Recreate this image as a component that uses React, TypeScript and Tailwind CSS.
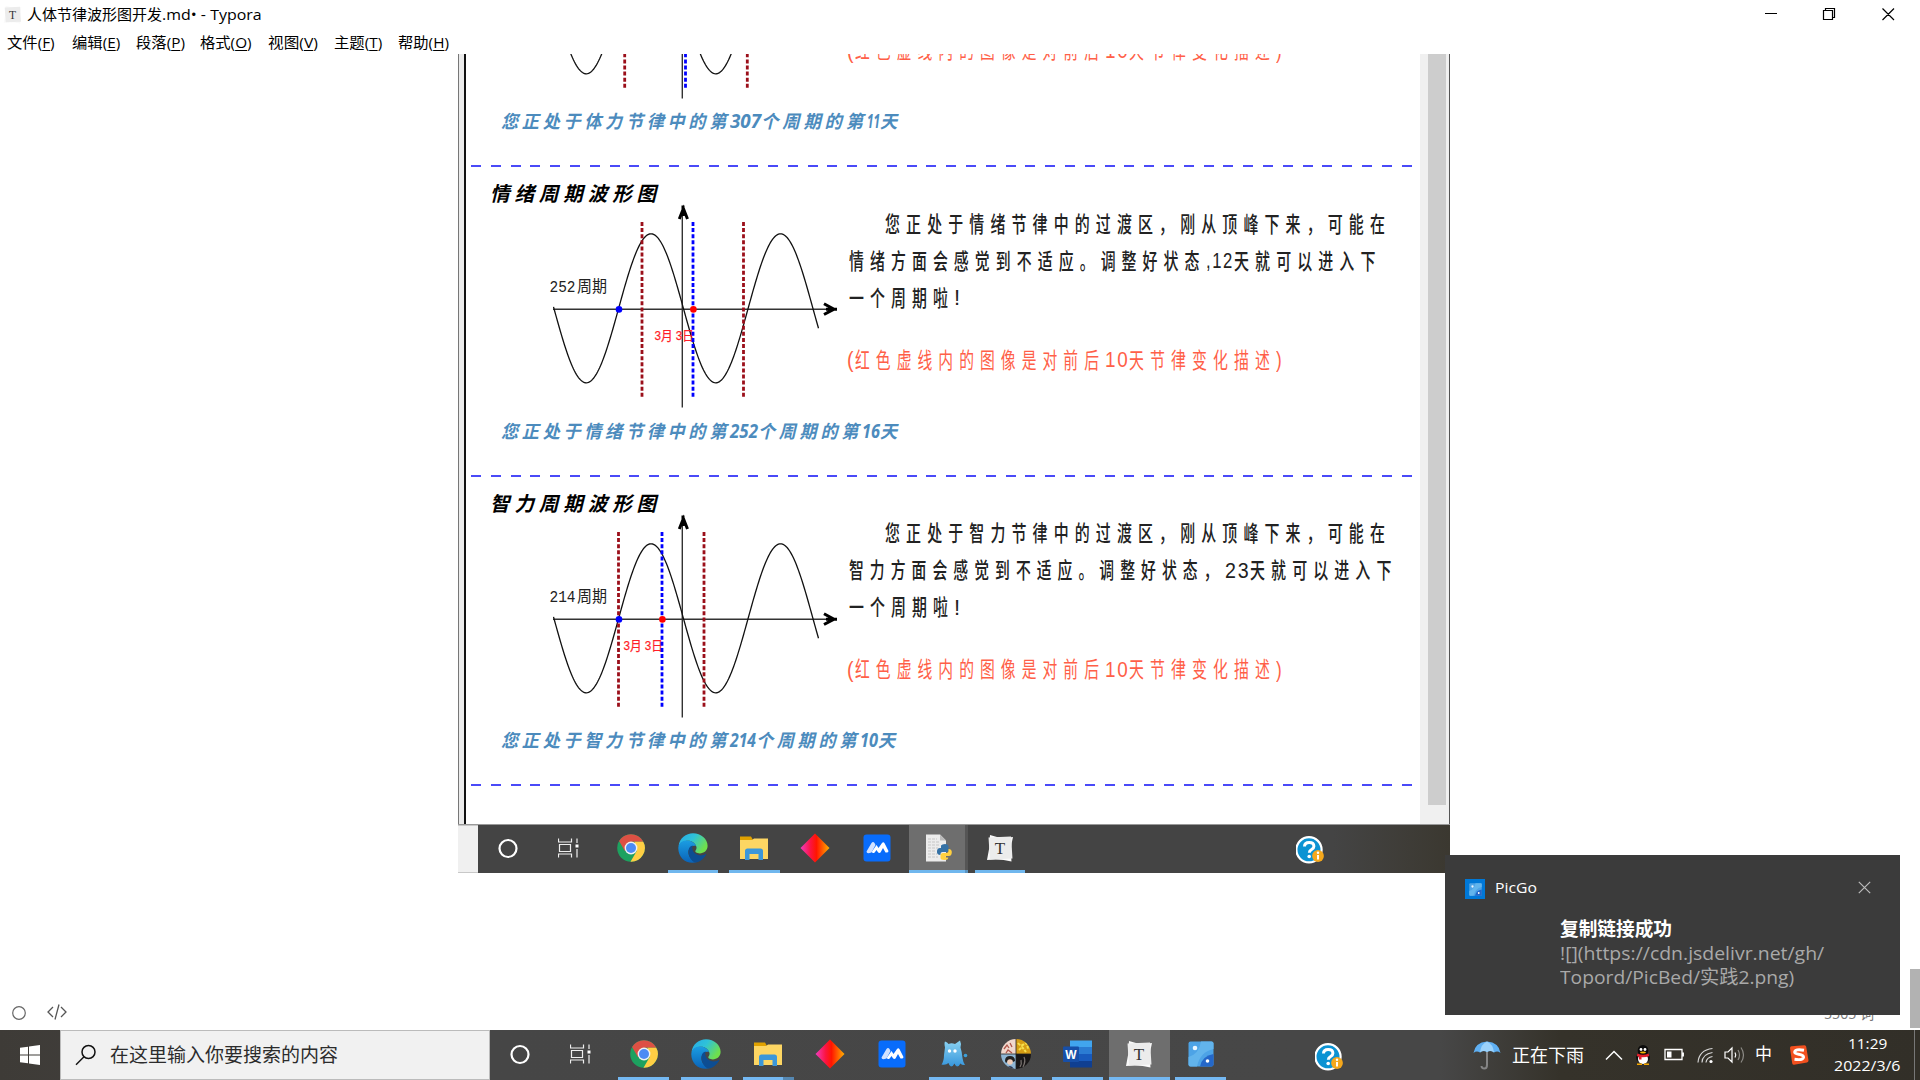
import { useLayoutEffect, useRef, useState, type ReactNode } from 'react';

/** Stretches its text horizontally so that it fills exactly `w` pixels. */
function Fit({ w, className = '', children }: { w: number; className?: string; children: ReactNode }) {
  const ref = useRef<HTMLSpanElement>(null);
  const [scale, setScale] = useState(1);
  useLayoutEffect(() => {
    if (ref.current) setScale(w / ref.current.offsetWidth);
  }, [w]);
  return (
    <span className="inline-block shrink-0 whitespace-nowrap text-left" style={{ width: w }}>
      <span ref={ref} className={`inline-block origin-left whitespace-pre ${className}`} style={{ transform: `scaleX(${scale})` }}>
        {children}
      </span>
    </span>
  );
}

type Seg = [string, number];

function wavePath() {
  const pts: string[] = [];
  for (let x = 553.5; x <= 818.5; x += 1) {
    const y = 308.3 + 74.5 * Math.sin((2 * Math.PI * (x - 553.9)) / 129.5);
    pts.push(`${x},${y.toFixed(2)}`);
  }
  return 'M' + pts.join('L');
}
const WAVE = wavePath();

interface Cycle {
  title: string;
  label: string;
  reds: number[];
  blue: number;
  dateX: number;
  lines: Seg[][];
  caption: Seg[];
}

const cycles: Cycle[] = [
  {
    title: '体力周期波形图',
    label: '307',
    reds: [624.7, 747.3],
    blue: 685.5,
    dateX: 647,
    lines: [[['您正处于体力节律中的过渡区，刚从顶峰下来，可能在', 506]], [], []],
    caption: [['您正处于体力节律中的第', 229], ['307', 31], ['个周期的第', 106], ['11', 13], ['天', 21]],
  },
  {
    title: '情绪周期波形图',
    label: '252',
    reds: [642, 743.5],
    blue: 693,
    dateX: 654.5,
    lines: [
      [['您正处于情绪节律中的过渡区，刚从顶峰下来，可能在', 506]],
      [['情绪方面会感觉到不适应。调整好状态', 356.5], [',12', 28], ['天就可以进入下', 147.5]],
      [['一个周期啦', 105], ['!', 8]],
    ],
    caption: [['您正处于情绪节律中的第', 229], ['252', 28], ['个周期的第', 104], ['16', 18], ['天', 21]],
  },
  {
    title: '智力周期波形图',
    label: '214',
    reds: [618.5, 704],
    blue: 662,
    dateX: 623.5,
    lines: [
      [['您正处于智力节律中的过渡区，刚从顶峰下来，可能在', 506]],
      [['智力方面会感觉到不适应。调整好状态，', 375.5], ['23', 25], ['天就可以进入下', 147.5]],
      [['一个周期啦', 105], ['!', 8]],
    ],
    caption: [['您正处于智力节律中的第', 229], ['214', 26], ['个周期的第', 104], ['10', 18], ['天', 21]],
  },
];

const NOTE: Seg[] = [['(', 8], ['红色虚线内的图像是对前后', 250], ['10', 24], ['天节律变化描述', 147], [')', 7]];

const isLatin = (s: string) => /^[\x20-\x7e]+$/.test(s);

function Line({ segs, indent = false }: { segs: Seg[]; indent?: boolean }) {
  return (
    <div className={`flex h-[37px] items-center leading-[37px] ${indent ? 'pl-[38px]' : ''}`}>
      {segs.map(([t, w], i) => (
        <Fit key={i} w={w} className={isLatin(t) ? 'text-[22px] font-normal font-["Liberation_Sans"] tracking-[2px] leading-[37px]' : 'text-[22px] tracking-[9px] leading-[37px]'}>
          {t}
        </Fit>
      ))}
    </div>
  );
}

function Chart({ c }: { c: Cycle }) {
  return (
    <svg className="block shrink-0" width="381" height="205" viewBox="466 203 381 205">
      <g fill="none">
        <path d="M682.3 407.500V215M553 309.3H826" stroke="#333" strokeWidth="1.4" />
        <path d="M683 205.500V216M679.3 219L683.4 208.500L687.500 219" stroke="#000" strokeWidth="3" />
        <path d="M824 303.800L834 309.200L824 314.500M826 309.200H837" stroke="#000" strokeWidth="3" />
        <path d={WAVE} stroke="#111" strokeWidth="1.3" />
        {c.reds.map((x) => (
          <path key={x} d={`M${x} 222V397`} stroke="#9b0f1a" strokeWidth="2.8" strokeDasharray="4 2.1" />
        ))}
      </g>
      <text x={c.dateX} y="339.800" fontSize="13" fill="#ff1e28" stroke="#ff1e28" strokeWidth=".25" textLength="39.5" lengthAdjust="spacingAndGlyphs" fontFamily="Liberation Sans, Noto Sans CJK SC, sans-serif">
        3月 3日
      </text>
      <path d={`M${c.blue} 222V397`} stroke="#0000ff" strokeWidth="2.8" strokeDasharray="4 2.1" />
      <circle cx="619" cy="309.4" r="3.3" fill="#0000ff" />
      <circle cx={c.blue + 0.4} cy="309.4" r="3.3" fill="#ff0000" />
      <text x="549.5" y="292" fontSize="16" fill="#222" textLength="26" lengthAdjust="spacingAndGlyphs" fontFamily="Liberation Mono, monospace">
        {c.label}
      </text>
      <text x="577" y="291.800" fontSize="16" fill="#222" textLength="30" lengthAdjust="spacingAndGlyphs" fontFamily="Noto Sans CJK SC, sans-serif">
        周期
      </text>
    </svg>
  );
}

const Dashes = () => (
  <div className="ml-[5px] h-[2px] w-[941.500px] bg-[repeating-linear-gradient(90deg,#4a4af8_0px,#4a4af8_10px,transparent_10px,transparent_19.8px)]" />
);

function Section({ c }: { c: Cycle }) {
  return (
    <section className="flex h-[309.4px] shrink-0 flex-col">
      <Dashes />
      <div className="h-[36px] pl-[24px] pt-[16px]">
        <Fit w={171} className="text-[20px] font-bold italic leading-[20px] tracking-[5px] text-black">
          {c.title}
        </Fit>
      </div>
      <div className="flex h-[205px]">
        <Chart c={c} />
        <div className="pt-[3px] font-medium text-[#222]">
          <Line segs={c.lines[0]} indent />
          <div className="pl-[2px]">
            <Line segs={c.lines[1]} />
            <Line segs={c.lines[2]} />
          </div>
          <div className="mt-[25px] font-normal text-[#ff5f48]">
            <Line segs={NOTE} />
          </div>
        </div>
      </div>
      <div className="flex pl-[35px] pt-[11.500px] font-bold italic text-[#4c8bbd]">
        {c.caption.map(([t, w], i) => (
          <Fit key={i} w={w} className={isLatin(t) ? 'text-[20px] leading-[22px]' : 'text-[18px] tracking-[4px] leading-[22px]'}>
            {t}
          </Fit>
        ))}
      </div>
    </section>
  );
}

/* ---------- icons ---------- */
const Cortana = () => (
  <svg width="24" height="24" viewBox="0 0 24 24"><circle cx="12" cy="12.500" r="8.5" fill="none" stroke="#fff" strokeWidth="2.2" /></svg>
);
const TaskView = () => (
  <svg width="22" height="22" viewBox="0 0 22 22" fill="none" stroke="#eee" strokeWidth="1.2">
    <path d="M.5 1.5V5H13.5V1.5M.5 20.5V17H13.5V20.5M1.5 7.5H12.5V14.5H1.5zM19 1.5V6M19 12V20.5" />
    <path d="M17.5 7.5h3v3h-3z" fill="#fff" stroke="none" />
  </svg>
);
const Chrome = () => (
  <svg width="28" height="28" viewBox="0 0 28 28">
    <circle cx="14" cy="14" r="13.8" fill="#1da15f" />
    <path d="M2.1 7A13.8 13.8 0 0 1 25.9 7L26 7.7H14L8 17.2z" fill="#dd5044" />
    <path d="M25.9 7A13.8 13.8 0 0 1 13.5 27.8L19.6 17.3L17.4 7.7H26.2z" fill="#ffce44" />
    <circle cx="14" cy="14" r="6.4" fill="#f1f1f1" /><circle cx="14" cy="14" r="5" fill="#4c8bf5" />
  </svg>
);
const Edge = () => (
  <svg width="30" height="30" viewBox="0 0 30 30">
    <defs>
      <linearGradient id="eg" x1="0" y1="0" x2="1" y2=".5"><stop offset="0" stopColor="#25a9e8" /><stop offset=".5" stopColor="#2fc2d8" /><stop offset="1" stopColor="#6fe04c" /></linearGradient>
      <linearGradient id="eb" x1="0" y1="0" x2="0" y2="1"><stop offset="0" stopColor="#1b9de2" /><stop offset="1" stopColor="#0a63b8" /></linearGradient>
    </defs>
    <path d="M.6 13C1.4 5 8 .2 15 .2c8 0 14.6 5.6 14.6 12.6 0 5-3.8 7.6-7.8 7.6-3.4 0-5-1.4-4.4-2.6 1-1.4 1.4-2.4 1-4C17.600 10 13 7 8.600 7.800 4.500 8.500 1.500 11 .6 13z" fill="url(#eg)" />
    <path d="M.3 15C.6 9.500 5 7.300 9 7.500c5 .2 8.500 3 9 5.500-2.500-1-6.500.5-7.500 4.500-1.200 5.500 3.500 10.500 8.500 11.500C9 32 .2 25 .3 15z" fill="url(#eb)" />
    <path d="M10.700 16.500c.5-2.200 2-3.600 4-4-1 2-.5 5.500 1.800 7.500 3 2.600 7.500 3.400 11 1 .6-.3 1 .2.6.8C25 27 20.500 29.800 17 29.500c-4-1.500-7.200-7-6.300-13z" fill="#0d4d92" />
  </svg>
);
const Folder = () => (
  <svg width="28" height="24" viewBox="0 0 28 24">
    <path d="M0 .5h11l2 3.500H0z" fill="#e0a100" /><path d="M0 4h12l2-1.500h14V23H0z" fill="#fdd663" />
    <path d="M5 24V15q0-2.500 2.500-2.500h13Q23 12.500 23 15v9h-4.500v-6h-9v6z" fill="#3c97d9" />
  </svg>
);
const Diamond = () => (
  <svg width="30" height="30" viewBox="0 0 30 30">
    <defs><linearGradient id="dg"><stop offset="0" stopColor="#f03cc0" /><stop offset=".35" stopColor="#fb1440" /><stop offset=".55" stopColor="#ff1500" /><stop offset="1" stopColor="#ffb000" /></linearGradient></defs>
    <path d="M15 .5L29.500 15L15 29.500L.5 15z" fill="url(#dg)" />
  </svg>
);
const Mountain = () => (
  <svg width="28" height="28" viewBox="0 0 28 28">
    <rect x=".5" y=".5" width="27" height="27" rx="3" fill="#086cfb" />
    <path d="M3.500 17.500L8.500 9q1.500-2 3 0l1 2-4 7.500q-5 2-5-1z" fill="#d2e2ff" />
    <path d="M9 17.500L13.500 11l2 3L19 9q1.500-1.500 2.700.5L25.500 17q0 2-3 1.500L20 14l-2.500 4.500q-1.500 1-2.700-.5L13.500 16l-1.800 2.500Q9 20 9 17.500z" fill="#fff" />
  </svg>
);
const TyporaIcon = ({ s = 28 }: { s?: number }) => (
  <svg width={s} height={s} viewBox="0 0 28 28">
    <path d="M4 1Q14 5 27 3Q24 14 25.500 27.500Q14 24.500 1 26Q4 14 4 1z" fill="#fafafa" />
    <path d="M2.500 3.500L25 2.500L26.500 24.500L4 25.500z" fill="#ececec" />
    <text x="14" y="20" fontSize="17" textAnchor="middle" fill="#333" fontFamily="Liberation Serif, serif">T</text>
  </svg>
);
const PyFile = () => (
  <svg width="28" height="28" viewBox="0 0 28 28">
    <path d="M2 .5h14l6 6V27.500H2z" fill="#ececec" /><path d="M16 .5v6h6z" fill="#bbb" />
    <path d="M4 5h9M4 8h12M4 11h12M4 14h10M4 17h8M4 20h9M4 23h10" stroke="#c6c6c6" strokeDasharray="3 1" />
    <path d="M17 14v-2.500q1-1.500 4-1.500t3.500 2v4q0 2-2 2h-4q-2 0-2 2v1q-4 0-3.500-4 .3-3 3-3h5z" fill="#3471a5" />
    <path d="M24.500 15q3.500 0 3.300 3.500-.2 3.500-3 3.500h-3v1.500h2.500q0 2.500-4 2.500t-3.800-2.500v-2q0-2.500 2.500-2.500h3.500q2 0 2-2z" fill="#ffd040" />
  </svg>
);
const Help = () => (
  <svg width="28" height="28" viewBox="0 0 28 28">
    <circle cx="13" cy="13.800" r="12.600" fill="#0c93d3" stroke="#fff" strokeWidth="2.200" />
    <path d="M8.500 10.500q0-4 4.700-4t4.700 3.700q0 2-2.300 3.300t-2.300 3.200" fill="none" stroke="#fff" strokeWidth="3" /><circle cx="13.200" cy="20.500" r="1.800" fill="#fff" />
    <circle cx="22" cy="20" r="5.900" fill="#f5a81c" /><path d="M22 19v4.500" stroke="#fff" strokeWidth="1.900" /><circle cx="22" cy="16.800" r="1.200" fill="#fff" />
  </svg>
);
const Ghost = () => (
  <svg width="28" height="28" viewBox="0 0 28 28">
    <defs><linearGradient id="gg" x1="0" y1="0" x2="0" y2="1"><stop offset="0" stopColor="#8bd3f2" /><stop offset="1" stopColor="#3796dc" /></linearGradient></defs>
    <path d="M5 7.500Q4 3 5 1.500Q7.500 2 8.500 4q3-1.500 6.500 0Q17.500 2 20 .5Q21.500 3 20.500 7.500Q22 12 22.500 18q.5 4 2.500 7-3 .5-4.500-1.500-1.500 3-3.500 3-2-1-2.500-3-1.500 3-3.500 3-2-1-2.500-3.500Q6 25.500 1.500 24.500Q4 21 4 15z" fill="url(#gg)" />
    <circle cx="9.500" cy="11" r="1.700" fill="#fff" /><circle cx="15" cy="11" r="1.700" fill="#fff" /><circle cx="25.500" cy="15.500" r="1.800" fill="#3c9fd9" />
  </svg>
);
const Photo = () => (
  <svg width="30" height="30" viewBox="0 0 30 30">
    <clipPath id="pc"><circle cx="15" cy="15" r="15" /></clipPath>
    <g clipPath="url(#pc)">
      <path d="M0 0h15v15H0z" fill="#f1d8cd" /><path d="M15 0h15v15H15z" fill="#d69d14" /><path d="M0 15h15v15H0z" fill="#8fb6d4" /><path d="M15 15h15v15H15z" fill="#191717" />
      <path d="M3 10l3-4 2 3M9 4l2 4M5 14l2-3 4 3" stroke="#b0564a" fill="none" strokeWidth="1.300" />
      <path d="M17 4q3 4 6 1t4 5M18 11l3-3 4 5" stroke="#f6e04e" fill="none" strokeWidth="2" strokeDasharray="3 1" />
      <path d="M4 22q0-5 5-5t5 5l-2 1-4-2-3 3z" fill="#222" /><circle cx="9" cy="23" r="2.800" fill="#f0cdb8" /><path d="M5 30q4-6 8 0z" fill="#2b3550" />
      <path d="M19 28q2-3 1-7M23 18q2 4-1 10" stroke="#77716e" fill="none" strokeWidth="1.300" />
      <path d="M15 0v30M0 15h30" stroke="#222" strokeWidth=".8" />
    </g>
  </svg>
);
const Word = () => (
  <svg width="30" height="28" viewBox="0 0 30 28">
    <path d="M7 .5h22V7H7z" fill="#41a5ee" /><path d="M7 7h22v7H7z" fill="#2b7cd3" /><path d="M7 14h22v7H7z" fill="#185abd" /><path d="M7 21h22v6.500H7z" fill="#103f91" />
    <rect x="0" y="6.500" width="16" height="15.500" rx="1" fill="#174fa8" />
    <text x="8" y="18.500" fontSize="12" fontWeight="700" fill="#fff" textAnchor="middle" fontFamily="Liberation Sans, sans-serif">W</text>
  </svg>
);
const PicGo = ({ s = 26 }: { s?: number }) => (
  <svg width={s} height={s} viewBox="0 0 26 26">
    <rect x=".5" y=".5" width="25" height="25" rx="2" fill="#4da3e6" />
    <path d="M13 .5h10.500q2 0 2 2V8Q12 11 9 25.500H2.500q-2 0-2-2V16Q11 13 13 .5z" fill="#62b4ec" />
    <path d="M25.500 13v10.500q0 2-2 2H12Q14 15 25.500 13z" fill="#2467c9" />
    <circle cx="7" cy="7" r="2.300" fill="#eaf6ff" /><circle cx="19.500" cy="20" r="1.800" fill="#fff" />
  </svg>
);
const Umbrella = () => (
  <svg width="28" height="30" viewBox="0 0 28 30">
    <path d="M14 10v15q0 3.500-2.700 3.500T8.500 26" fill="none" stroke="#858585" strokeWidth="2" />
    <path d="M.5 13Q2 2.500 14 1.500Q26 2.500 27.500 13q-3-2.500-6.500-.5-3.500-2.500-7-.5-3.500-2-7 .5-3.500-2-6.500.5z" fill="#5fb0f3" />
    <path d="M7 12.500Q8 4 14 1.500Q20 4 21 12.500q-3.500-2.500-7-.5-3.500-2-7 .5z" fill="#9bd2fb" />
  </svg>
);
const QQ = () => (
  <svg width="16" height="20" viewBox="0 0 16 20">
    <ellipse cx="8" cy="12.500" rx="7" ry="5.500" fill="#111" /><ellipse cx="8" cy="14" rx="5" ry="5" fill="#fff" />
    <ellipse cx="8" cy="5.500" rx="5.300" ry="5.500" fill="#0b0b0b" /><circle cx="6" cy="4.500" r="1.400" fill="#fff" /><circle cx="10" cy="4.500" r="1.400" fill="#fff" />
    <ellipse cx="8" cy="7.500" rx="3" ry="1" fill="#f5b400" /><path d="M2.500 8.500q5.500 2.500 11 0l.8 2.500Q8 13.500 1.700 11zM4 11h2.500v3.500H4z" fill="#e2202c" />
    <path d="M2 18.500h5v1.500H2zM9 18.500h5v1.500H9z" fill="#f5a800" />
  </svg>
);

const Slot = ({ children, bar, active = false, w = 'w-[62.1px]' }: { children?: ReactNode; bar?: string; active?: boolean; w?: string }) => (
  <div className={`flex h-full shrink-0 flex-col items-center ${w} ${active ? 'bg-[#6e6e6e]' : ''}`}>
    <div className="flex flex-1 items-center justify-center pt-[1px]">{children}</div>
    <div className={`h-[3px] shrink-0 ${bar ?? ''}`} />
  </div>
);

function InnerTaskbar() {
  const w = 'w-[61.4px]';
  return (
    <div className="flex h-[49.5px] border-t border-[#999]">
      <div className="w-[20px] border-y border-[#c8c8c8] bg-[#f0f0f0]" />
      <div className="flex flex-1 bg-[linear-gradient(90deg,#444_0%,#444_88%,#3b3830_100%)]">
        <Slot w="w-[60px]"><Cortana /></Slot>
        <Slot w="w-[61px]"><TaskView /></Slot>
        <Slot w="w-[63px]"><Chrome /></Slot>
        <Slot w={w} bar="w-[50px] bg-[#70b7ee]"><Edge /></Slot>
        <Slot w={w} bar="w-[51px] bg-[#70b7ee]"><Folder /></Slot>
        <Slot w={w}><Diamond /></Slot>
        <Slot w={w}><Mountain /></Slot>
        <div className="flex w-[61.400px] pl-[1px]">
          <Slot w="w-[56px]" active bar="w-full bg-[#70b7ee]"><div className="pl-[3px]"><PyFile /></div></Slot>
          <div className="flex w-[3.500px] flex-col justify-end bg-[#555]"><div className="h-[3px] bg-[#5a93c0]" /></div>
        </div>
        <Slot w="w-[62px]" bar="w-[50px] bg-[#70b7ee]"><TyporaIcon /></Slot>
        <div className="flex flex-1 items-center pl-[265px] pt-[2px]"><Help /></div>
      </div>
    </div>
  );
}

const menus: [string, string, string][] = [
  ['文件', 'F', 'w-[64.500px]'], ['编辑', 'E', 'w-[64px]'], ['段落', 'P', 'w-[64.500px]'], ['格式', 'O', 'w-[68px]'],
  ['视图', 'V', 'w-[66px]'], ['主题', 'T', 'w-[64px]'], ['帮助', 'H', 'w-[64px]'],
];
const menuTextWidth = [48, 48, 49, 52, 50, 48, 51];

export default function App() {
  return (
    <div className="relative flex h-[1080px] w-[1920px] flex-col overflow-hidden bg-white text-black [font-family:'Open_Sans','Noto_Sans_CJK_SC',sans-serif]">
      <header className="h-[54px] shrink-0">
        <div className="flex h-[28px] items-center justify-between">
          <div className="flex items-center pl-[3px]">
            <TyporaIcon s={19} />
            <div className="flex pl-[5px] text-[15px] leading-[20px]">
              <Fit w={135}>人体节律波形图开发</Fit>
              <Fit w={100}>.md• - Typora</Fit>
            </div>
          </div>
          <svg className="mr-[10px]" width="160" height="28" viewBox="1750 0 160 28" fill="none" stroke="#000" strokeWidth="1.200">
            <path d="M1765 13.500h12M1823.500 10.500h9v9h-9zM1825.500 10.500V8.500h9v9h-2M1882.500 8.500l11.500 11.500M1894 8.500l-11.500 11.500" />
          </svg>
        </div>
        <nav className="flex pl-[7px] pt-[3px] text-[15px] leading-[22px]">
          {menus.map(([t, k, w], i) => (
            <div key={k} className={w}>
              <Fit w={menuTextWidth[i]}>{t}(<span className="underline underline-offset-2">{k}</span>)</Fit>
            </div>
          ))}
        </nav>
      </header>

      <main className="flex h-[976px] shrink-0 flex-col">
        <div className="ml-[458px] h-[819px] w-[991.500px] overflow-hidden">
          <div className="flex h-[769.500px]">
            <div className="w-[8px] shrink-0 border-l border-r-2 border-l-[#777] border-r-[#111] bg-[#ebebeb]" />
            <div className="flex w-[954px] shrink-0 flex-col overflow-hidden">
              <div className="-mt-[198.200px] flex flex-col">
                {cycles.map((c) => <Section key={c.label} c={c} />)}
                <Dashes />
              </div>
            </div>
            <div className="flex-1 border-r border-[#555] bg-[#f0f0f0] pl-[8px]">
              <div className="h-[751px] w-[18px] bg-[#cdcdcd]" />
            </div>
          </div>
          <InnerTaskbar />
        </div>
        <div className="flex flex-1 items-end">
          <div className="flex items-center gap-[20px] pb-[8px] pl-[11px]">
            <svg width="16" height="18" viewBox="0 0 16 18"><circle cx="8" cy="9" r="6.300" fill="none" stroke="#666" strokeWidth="1.200" /></svg>
            <svg width="20" height="18" viewBox="0 0 20 18" fill="none" stroke="#555" strokeWidth="1.300"><path d="M6 3L1 8l5 5M14 3l5 5-5 5M12 .5L8 15.500" /></svg>
          </div>
          <div className="ml-auto flex items-end">
            <div className="mr-[36px] pb-[7px] text-[15px] leading-[20px] text-[#777]"><Fit w={50}>5505 词</Fit></div>
            <div className="mb-[2px] h-[59px] w-[10px] bg-[#b2b2b2]" />
          </div>
        </div>
      </main>

      <footer className="flex h-[50px] shrink-0 bg-[linear-gradient(90deg,#3e3b37_0px,#464646_490px,#474747_1300px,#474747_1440px,#35322a_1560px,#322f28_1920px)] text-white">
        <div className="flex w-[60px] items-center justify-center">
          <svg width="20" height="20" viewBox="0 0 20 20" fill="#fff"><path d="M0 2.800L8 1.700V9.500H0zM9 1.500L20 0v9.500H9zM0 10.500h8v7.800L0 17.200zM9 10.500h11V20L9 18.500z" /></svg>
        </div>
        <div className="flex w-[430px] items-center border border-[#bbb] bg-[#f1f1f1] pl-[14px] text-[19px] text-[#2c2c2c]">
          <svg width="22" height="22" viewBox="0 0 22 22" fill="none" stroke="#111" strokeWidth="1.500"><circle cx="13.500" cy="8" r="6.500" /><path d="M9 12.800L1 20.800" /></svg>
          <span className="pl-[13px] leading-[46px]"><Fit w={228}>在这里输入你要搜索的内容</Fit></span>
        </div>
        <Slot w="w-[60px]"><Cortana /></Slot>
        <Slot w="w-[62px]"><TaskView /></Slot>
        <Slot w="w-[63px]" bar="w-[51px] bg-[#74b8f2]"><Chrome /></Slot>
        <Slot bar="w-[51px] bg-[#74b8f2]"><Edge /></Slot>
        <Slot bar="w-[51px] bg-[linear-gradient(90deg,#74b8f2_40px,#5688b2_40px)]"><Folder /></Slot>
        <Slot><Diamond /></Slot>
        <Slot><Mountain /></Slot>
        <Slot w="w-[61.900px]" bar="w-[51px] bg-[#74b8f2]"><Ghost /></Slot>
        <Slot w="w-[61.900px]" bar="w-[51px] bg-[#74b8f2]"><Photo /></Slot>
        <Slot w="w-[61.500px]" bar="w-[51px] bg-[#74b8f2]"><Word /></Slot>
        <Slot w="w-[61px]" active bar="w-full bg-[#74b8f2]"><TyporaIcon /></Slot>
        <Slot bar="w-[51px] bg-[#74b8f2]"><PicGo /></Slot>
        <div className="flex flex-1 items-center pl-[83px] pt-[3px]"><Help /></div>
        <div className="flex shrink-0 items-center">
          <Umbrella />
          <span className="pl-[11px] text-[18px] leading-[24px]"><Fit w={72}>正在下雨</Fit></span>
          <svg className="ml-[21px]" width="18" height="12" viewBox="0 0 18 12" fill="none" stroke="#fff" strokeWidth="1.500"><path d="M1 10.500L9 2.500l8 8" /></svg>
          <span className="ml-[12px]"><QQ /></span>
          <svg className="ml-[13px]" width="20" height="14" viewBox="0 0 20 14" fill="none" stroke="#fff" strokeWidth="1.300"><path d="M1 1.500h17v10H1zM19.300 4.500v4" /><path d="M3 3.500h4.500v6H3z" fill="#fff" stroke="none" /></svg>
          <svg className="ml-[13px]" width="16" height="17" viewBox="0 0 16 17" fill="none" stroke="#d8d8d8" strokeWidth="1.200"><path d="M1 15.500Q2 3 15.500 1.500M5 15.500Q5.500 7 15.500 5.500M9 15.500q.5-5 6.500-6" /><circle cx="14" cy="14.500" r="1.600" fill="#fff" stroke="none" /></svg>
          <svg className="ml-[11px]" width="22" height="18" viewBox="0 0 22 18" fill="none" stroke="#fff" strokeWidth="1.200"><path d="M1 6h3l4-4v14l-4-4H1zM11 6.500q1.500 2.500 0 5" /><path d="M14 4q3 5 0 10M17 1.500q5 7.500 0 15" stroke="#8d8b86" /></svg>
          <span className="ml-[9px] text-[17px] leading-[20px] -translate-y-px">中</span>
          <svg className="ml-[17px]" width="20" height="20" viewBox="0 0 20 20"><path d="M1 3Q1 1.500 2.500 1.300L15.500.2q1.500 0 1.700 1.500L19.500 15.500q0 1.500-1.500 2L5 19.800q-1.500 0-1.800-1.500z" fill="#f2501f" /><path d="M15 5.200Q6 3.500 5.700 7.200C5.500 10 14.800 8.500 14.500 12.200Q14 15.500 5.500 14.300" fill="none" stroke="#fff" strokeWidth="3" /></svg>
          <div className="ml-[25px] flex w-[66px] flex-col items-center pb-[2px] text-[15px] leading-[22.500px]">
            <Fit w={39}>11:29</Fit>
            <Fit w={66}>2022/3/6</Fit>
          </div>
          <div className="ml-[14px] mr-[5px] h-[50px] w-px bg-[#777]" />
        </div>
      </footer>

      {/* desktop notification floating over the window */}
      <aside className="absolute left-[1445px] top-[855px] h-[160px] w-[455px] bg-[#3b3b3b] pl-[20px] pr-[29px] pt-[20px] text-white">
        <div className="flex items-center">
          <div className="mt-[4px] flex h-[20px] w-[20px] items-center justify-center bg-[#0078d7]"><PicGo s={13} /></div>
          <span className="ml-[10px] text-[15px] leading-[22px]"><Fit w={42}>PicGo</Fit></span>
          <svg className="ml-auto" width="13" height="13" viewBox="0 0 13 13" stroke="#bbb" strokeWidth="1.200"><path d="M.8.8l11.400 11.400M12.200.8L.8 12.200" /></svg>
        </div>
        <div className="flex flex-col pl-[95px] pt-[18px] text-[19px] leading-[24px] text-[#a9a9a9]">
          <Fit w={112} className="font-bold text-white">复制链接成功</Fit>
          <Fit w={264}>![](https://cdn.jsdelivr.net/gh/</Fit>
          <Fit w={234}>Topord/PicBed/实践2.png)</Fit>
        </div>
      </aside>
    </div>
  );
}
